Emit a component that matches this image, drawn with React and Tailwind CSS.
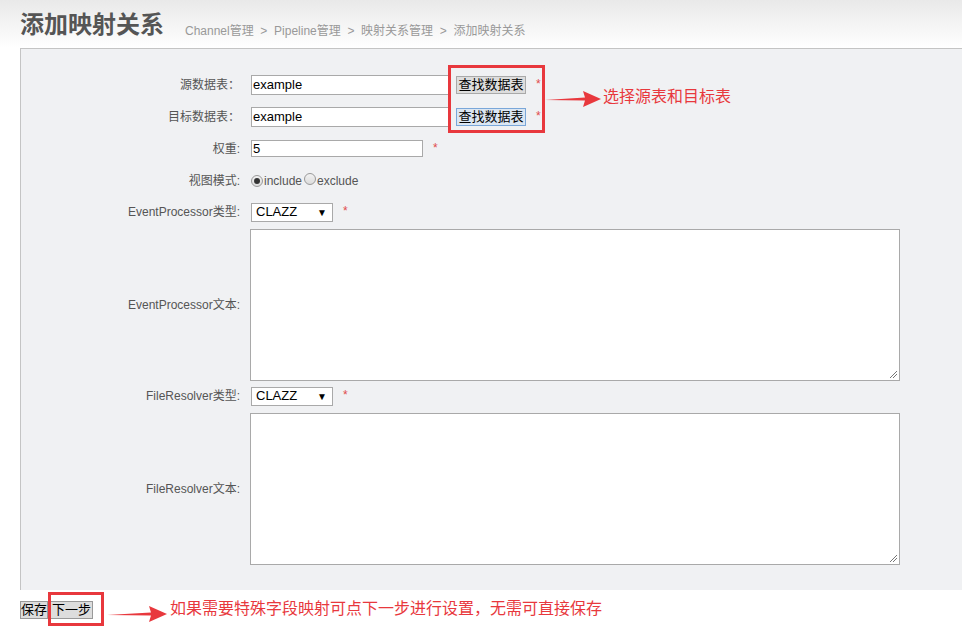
import React from "react";

const font = { fontFamily: '"Liberation Sans", Arial, "Noto Sans CJK SC", sans-serif' };

function Label({ children, center }) {
  return (
    <div className={`w-[220px] shrink-0 pr-[1px] text-right text-[12px] text-[#555] ${center ? "self-center" : ""}`}>
      {children}
    </div>
  );
}

function Star({ className = "" }) {
  return <span className={`text-[12px] text-[#e04b4b] ${className}`}>*</span>;
}

function Select() {
  return (
    <div className="relative flex h-[19px] w-[82px] items-center border border-[#a9a9a9] bg-white pl-[4px] text-[13px] text-black">
      CLAZZ
      <span className="absolute right-[5px] top-[3px] text-[10px] leading-[12px]">▼</span>
    </div>
  );
}

function Radio({ checked }) {
  return (
    <span className="inline-flex h-[12px] w-[12px] items-center justify-center rounded-full border border-[#9a9a9a] bg-gradient-to-b from-[#f2f2f2] to-[#dcdcdc]">
      {checked && <span className="h-[6px] w-[6px] rounded-full bg-[#333]" />}
    </span>
  );
}

function Arrow({ width }) {
  return (
    <svg width={width} height="22" viewBox={`0 0 ${width} 22`}>
      <polygon
        points={`0,12 ${width - 16},9.5 ${width - 18},3 ${width},11 ${width - 18},19 ${width - 16},12.5`}
        fill="#e8383d"
      />
    </svg>
  );
}

export default function App() {
  return (
    <div className="relative h-[629px] w-[962px] overflow-hidden bg-white" style={font}>
      {/* header */}
      <div className="flex h-[48px] items-end bg-gradient-to-b from-[#e9e9e9] to-white pl-[20px]">
        <h1 className="mb-[9px] text-[24px] font-bold leading-[28px] text-[#555]">添加映射关系</h1>
        <div className="mb-[8px] ml-[21px] text-[12px] text-[#999]">
          Channel管理 &nbsp;&gt;&nbsp; Pipeline管理 &nbsp;&gt;&nbsp; 映射关系管理 &nbsp;&gt;&nbsp; 添加映射关系
        </div>
      </div>

      {/* panel */}
      <div className="ml-[20px] border-l border-t border-[#c4c4c4] bg-[#f0f1f3] pb-[25px] pt-[20px]">
        <div className="flex h-[32px] items-center">
          <Label>源数据表：</Label>
          <div className="ml-[10px] flex items-center">
            <div className="flex h-[20px] w-[200px] items-center border border-[#a9a9a9] bg-white pl-[1px] text-[13px] text-black">example</div>
            <button className="ml-[5px] h-[18px] w-[70px] border border-[#a9a9a9] bg-[#dddddd] text-[13px] leading-[16px] text-black">查找数据表</button>
            <Star className="ml-[10px] -mt-[2px]" />
          </div>
        </div>
        <div className="flex h-[32px] items-center">
          <Label>目标数据表：</Label>
          <div className="ml-[10px] flex items-center">
            <div className="flex h-[20px] w-[200px] items-center border border-[#a9a9a9] bg-white pl-[1px] text-[13px] text-black">example</div>
            <button className="ml-[5px] h-[18px] w-[70px] border border-[#7aa7d9] bg-[#dbe6f2] text-[13px] leading-[16px] text-black">查找数据表</button>
            <Star className="ml-[10px] -mt-[2px]" />
          </div>
        </div>
        <div className="flex h-[31px] items-center">
          <Label>权重:</Label>
          <div className="ml-[10px] flex items-center">
            <div className="flex h-[17px] w-[172px] items-center border border-[#a9a9a9] bg-white pl-[1px] text-[13px] text-black">5</div>
            <Star className="ml-[10px] -mt-[2px]" />
          </div>
        </div>
        <div className="flex h-[34px] items-center">
          <Label>视图模式:</Label>
          <div className="ml-[10px] flex items-center text-[12px] text-[#555]">
            <Radio checked />
            <span className="ml-[1px]">include</span>
            <span className="ml-[2px]"><Radio /></span>
            <span className="ml-[1px]">exclude</span>
          </div>
        </div>
        <div className="flex h-[28px] items-center">
          <Label>EventProcessor类型:</Label>
          <div className="ml-[10px] flex items-center">
            <Select />
            <Star className="ml-[10px] -mt-[2px]" />
          </div>
        </div>
        <div className="mt-[3px] flex">
          <Label center>EventProcessor文本:</Label>
          <div className="relative ml-[9px] h-[152px] w-[650px] border border-[#a9a9a9] bg-white">
            <svg className="absolute bottom-[1px] right-[1px]" width="9" height="9" viewBox="0 0 9 9">
              <line x1="1" y1="8" x2="8" y2="1" stroke="#777" />
              <line x1="4" y1="8" x2="8" y2="4" stroke="#777" />
            </svg>
          </div>
        </div>
        <div className="mt-[3px] flex h-[24px] items-center">
          <Label>FileResolver类型:</Label>
          <div className="ml-[10px] flex items-center">
            <Select />
            <Star className="ml-[10px] -mt-[2px]" />
          </div>
        </div>
        <div className="mt-[5px] flex">
          <Label center>FileResolver文本:</Label>
          <div className="relative ml-[9px] h-[152px] w-[650px] border border-[#a9a9a9] bg-white">
            <svg className="absolute bottom-[1px] right-[1px]" width="9" height="9" viewBox="0 0 9 9">
              <line x1="1" y1="8" x2="8" y2="1" stroke="#777" />
              <line x1="4" y1="8" x2="8" y2="4" stroke="#777" />
            </svg>
          </div>
        </div>
      </div>

      {/* bottom buttons */}
      <div className="ml-[20px] mt-[11px] flex items-center gap-[2px]">
        <button className="h-[18px] w-[28px] border border-[#999] bg-[#dddddd] text-[13px] leading-[16px] text-black">保存</button>
        <button className="h-[18px] w-[43px] border border-[#999] bg-[#dddddd] text-[13px] leading-[16px] text-black">下一步</button>
      </div>

      {/* annotations */}
      <div className="absolute left-[448px] top-[65px] h-[68px] w-[97px] border-[3px] border-[#e8383d]" />
      <div className="absolute left-[545px] top-[88px]"><Arrow width={56} /></div>
      <div className="absolute left-[603px] top-[87px] text-[16px] leading-[20px] text-[#e8383d]">选择源表和目标表</div>

      <div className="absolute left-[48px] top-[592px] h-[34px] w-[56px] border-[3px] border-[#e8383d]" />
      <div className="absolute left-[107px] top-[603px]"><Arrow width={60} /></div>
      <div className="absolute left-[170px] top-[599px] text-[16px] leading-[20px] text-[#e8383d]">如果需要特殊字段映射可点下一步进行设置，无需可直接保存</div>
    </div>
  );
}
